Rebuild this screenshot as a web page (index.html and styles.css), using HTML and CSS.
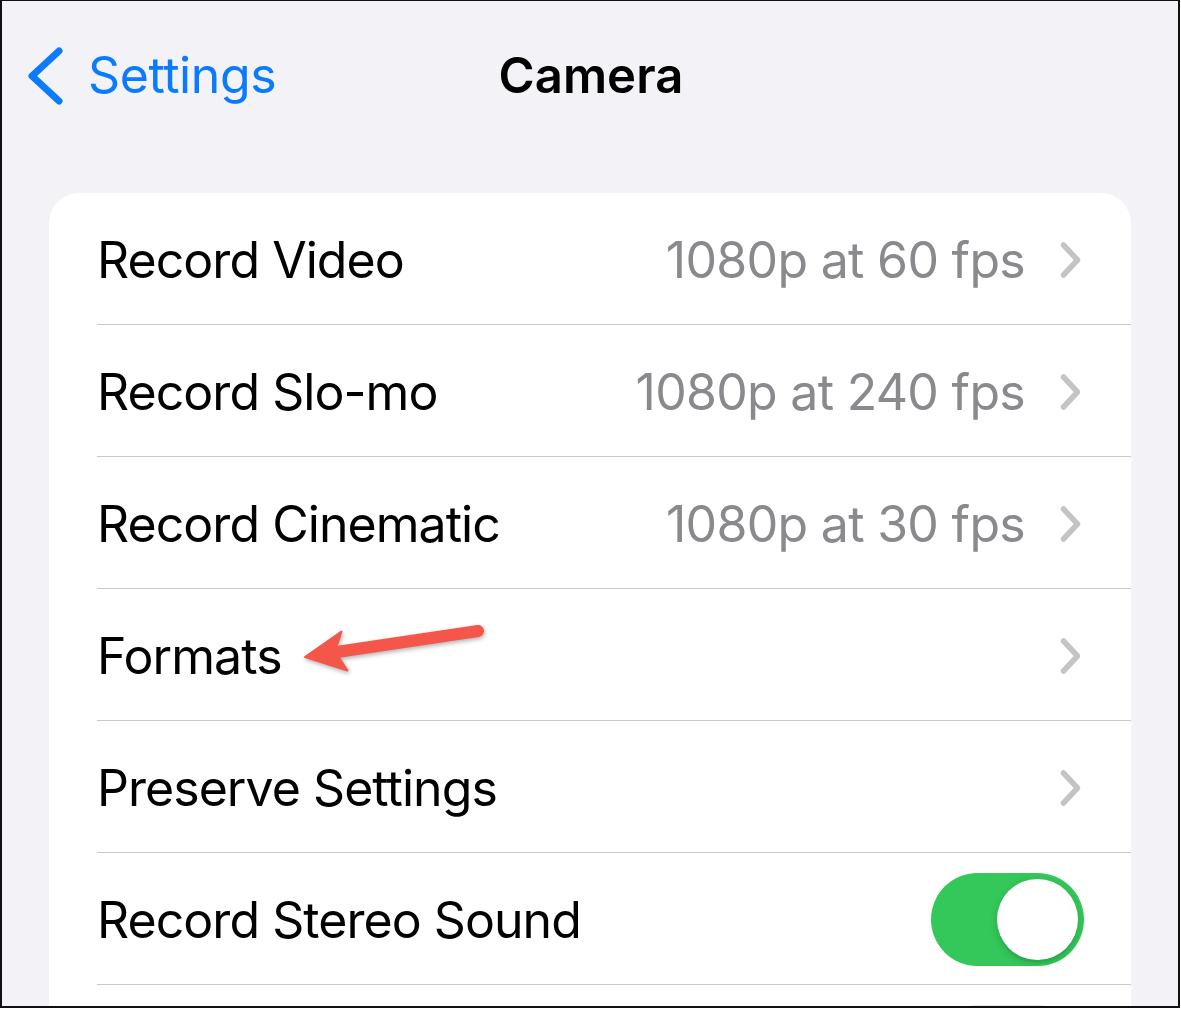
FILE: index.html
```html
<!DOCTYPE html>
<html lang="en">
<head>
<meta charset="utf-8">
<title>Camera</title>
<link rel="stylesheet" href="styles.css">
</head>
<body>
<div class="frame">
  <header class="nav">
    <a class="back" href="#">
      <svg class="back-chev" width="40" height="60" viewBox="0 0 40 60"><path d="M33 6 L6 31 L33 56" fill="none" stroke="#0a7aff" stroke-width="7" stroke-linecap="round" stroke-linejoin="round"/></svg>
      <span>Settings</span>
    </a>
    <h1 class="title">Camera</h1>
    <span class="spacer"></span>
  </header>

  <section class="card">
    <div class="row"><div class="row-body"><span class="label">Record Video</span><span class="value">1080p at 60 fps</span><svg class="chev" width="26" height="40" viewBox="0 0 26 40"><path d="M5.5 5 L19.5 20 L5.5 35" fill="none" stroke="#c4c4c7" stroke-width="5.5" stroke-linecap="round" stroke-linejoin="round"/></svg></div></div>
    <div class="row"><div class="row-body"><span class="label">Record Slo-mo</span><span class="value">1080p at 240 fps</span><svg class="chev" width="26" height="40" viewBox="0 0 26 40"><path d="M5.5 5 L19.5 20 L5.5 35" fill="none" stroke="#c4c4c7" stroke-width="5.5" stroke-linecap="round" stroke-linejoin="round"/></svg></div></div>
    <div class="row"><div class="row-body"><span class="label">Record Cinematic</span><span class="value">1080p at 30 fps</span><svg class="chev" width="26" height="40" viewBox="0 0 26 40"><path d="M5.5 5 L19.5 20 L5.5 35" fill="none" stroke="#c4c4c7" stroke-width="5.5" stroke-linecap="round" stroke-linejoin="round"/></svg></div></div>
    <div class="row"><div class="row-body"><span class="label">Formats</span><span class="value"></span><svg class="chev" width="26" height="40" viewBox="0 0 26 40"><path d="M5.5 5 L19.5 20 L5.5 35" fill="none" stroke="#c4c4c7" stroke-width="5.5" stroke-linecap="round" stroke-linejoin="round"/></svg></div></div>
    <div class="row"><div class="row-body"><span class="label">Preserve Settings</span><span class="value"></span><svg class="chev" width="26" height="40" viewBox="0 0 26 40"><path d="M5.5 5 L19.5 20 L5.5 35" fill="none" stroke="#c4c4c7" stroke-width="5.5" stroke-linecap="round" stroke-linejoin="round"/></svg></div></div>
    <div class="row"><div class="row-body"><span class="label">Record Stereo Sound</span><span class="toggle on"><span class="knob"></span></span></div></div>
    <div class="row"><div class="row-body"><span class="label"></span><span class="toggle off"><span class="knob"></span></span></div></div>
  </section>

  <svg class="arrow" width="200" height="70" viewBox="295 620 200 70">
    <line x1="478" y1="631" x2="340" y2="651.5" stroke="#f4574a" stroke-width="12" stroke-linecap="round"/>
    <polygon points="305,657 341.5,631.5 335,651.5 347.5,670.5" fill="#f4574a" stroke="#f4574a" stroke-width="2" stroke-linejoin="round"/>
  </svg>
</div>
</body>
</html>
```

FILE: styles.css
```css
* { box-sizing: border-box; }

html, body {
  margin: 0;
  padding: 0;
  background: #ffffff;
}

.frame {
  position: relative;
  width: 1180px;
  height: 1008px;
  overflow: hidden;
  background: #f2f2f7;
  border-left: 2px solid #111;
  border-top: 1px solid #111;
  border-right: 2px solid #111;
  border-bottom: 2px solid #111;
  padding: 0 47px;
  font-family: Inter, "Noto Sans", sans-serif;
  -webkit-font-smoothing: antialiased;
}

.nav {
  display: grid;
  grid-template-columns: 1fr auto 1fr;
  align-items: center;
  height: 148px;
  margin: 0 -47px;
  padding: 0;
}

.back {
  display: flex;
  align-items: center;
  color: #0a7aff;
  text-decoration: none;
  font-size: 50px;
  font-weight: 400;
  letter-spacing: -0.4px;
  padding-left: 24px;
}

.back-chev {
  display: block;
  margin-right: 22px;
}

.title {
  margin: 0;
  font-size: 49px;
  font-weight: 600;
  color: #000;
  letter-spacing: 0.1px;
  position: relative;
  left: 1px;
}

.card {
  margin-top: 44px;
  background: #fff;
  border-radius: 30px;
}

.row {
  padding-left: 48px;
}

.row-body {
  display: flex;
  align-items: center;
  height: 132px;
  border-bottom: 1px solid #c8c8cb;
  padding-right: 47px;
  padding-top: 2px;
}

.label {
  flex: 1;
  font-size: 50px;
  color: #000;
  letter-spacing: -0.95px;
}

.value {
  font-size: 50px;
  color: #8a8a8e;
  letter-spacing: -0.7px;
  margin-right: 33px;
}

.chev {
  display: block;
  flex: none;
}

.toggle {
  position: relative;
  display: block;
  flex: none;
  width: 153px;
  height: 93px;
  border-radius: 47px;
}

.toggle.on { background: #34c759; }
.toggle.off { background: #e9e9eb; }

.knob {
  position: absolute;
  top: 6px;
  width: 81px;
  height: 81px;
  border-radius: 50%;
  background: #fff;
  box-shadow: 0 3px 8px rgba(0,0,0,0.15), 0 3px 1px rgba(0,0,0,0.06);
}

.toggle.on .knob { right: 6px; }
.toggle.off .knob { left: 6px; }

.arrow {
  position: absolute;
  left: 293px;
  top: 619px;
  filter: drop-shadow(1px 2px 2px rgba(0,0,0,0.3));
}
```
